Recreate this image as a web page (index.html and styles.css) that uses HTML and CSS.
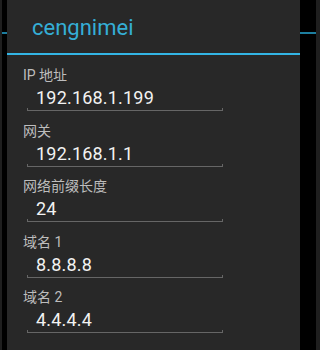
FILE: index.html
```html
<!DOCTYPE html>
<html lang="zh-CN">
<head>
    <meta charset="UTF-8">
    <meta name="viewport" content="width=device-width, initial-scale=1.0">
    <title>cengnimei</title>
    <link rel="stylesheet" href="styles.css">
</head>
<body>
    <div class="screen">
        <div class="edge edge-left"></div>
        <div class="gutter gutter-left"></div>
        <div class="dialog">
            <div class="dialog-title">cengnimei</div>
            <div class="dialog-body">
                <div class="field">
                    <div class="field-label">IP 地址</div>
                    <div class="field-value">192.168.1.199</div>
                    <div class="underline"></div>
                </div>
                <div class="field">
                    <div class="field-label">网关</div>
                    <div class="field-value">192.168.1.1</div>
                    <div class="underline"></div>
                </div>
                <div class="field">
                    <div class="field-label">网络前缀长度</div>
                    <div class="field-value">24</div>
                    <div class="underline"></div>
                </div>
                <div class="field">
                    <div class="field-label">域名 1</div>
                    <div class="field-value">8.8.8.8</div>
                    <div class="underline"></div>
                </div>
                <div class="field">
                    <div class="field-label">域名 2</div>
                    <div class="field-value">4.4.4.4</div>
                    <div class="underline"></div>
                </div>
            </div>
        </div>
        <div class="gutter gutter-right"></div>
        <div class="edge edge-right"></div>
    </div>
</body>
</html>
```

FILE: styles.css
```css
html, body {
    margin: 0;
    padding: 0;
    height: 100%;
    overflow: hidden;
}

body {
    font-family: Roboto, "Noto Sans CJK SC", sans-serif;
    background: linear-gradient(to bottom, #000 32px, #1d7e9f 32px, #1d7e9f 34px, #000 34px);
}

.screen {
    display: flex;
    height: 350px;
}

.edge {
    background-color: #1f1f1f;
}

.edge-left {
    width: 2px;
}

.edge-right {
    width: 4px;
}

.gutter-left {
    width: 5px;
}

.gutter-right {
    width: 16px;
}

.dialog {
    width: 293px;
    background-color: #282828;
    overflow: hidden;
}

.dialog-title {
    height: 51px;
    padding: 2px 0 0 25px;
    line-height: 51px;
    font-size: 22px;
    color: #35aed6;
    border-bottom: 2px solid #33b5e5;
}

.dialog-body {
    padding: 11px 0 0 16px;
}

.field {
    width: 200px;
    height: 55.5px;
}

.field-label {
    line-height: 18px;
    margin-bottom: 4px;
    font-size: 14px;
    color: #bdbdbd;
}

.field-value {
    line-height: 20px;
    font-size: 18px;
    letter-spacing: 0.2px;
    color: #f2f2f2;
    padding-left: 13px;
}

.underline {
    margin-left: 4px;
    height: 2px;
    border: 1px solid #666;
    border-top: none;
}
```
